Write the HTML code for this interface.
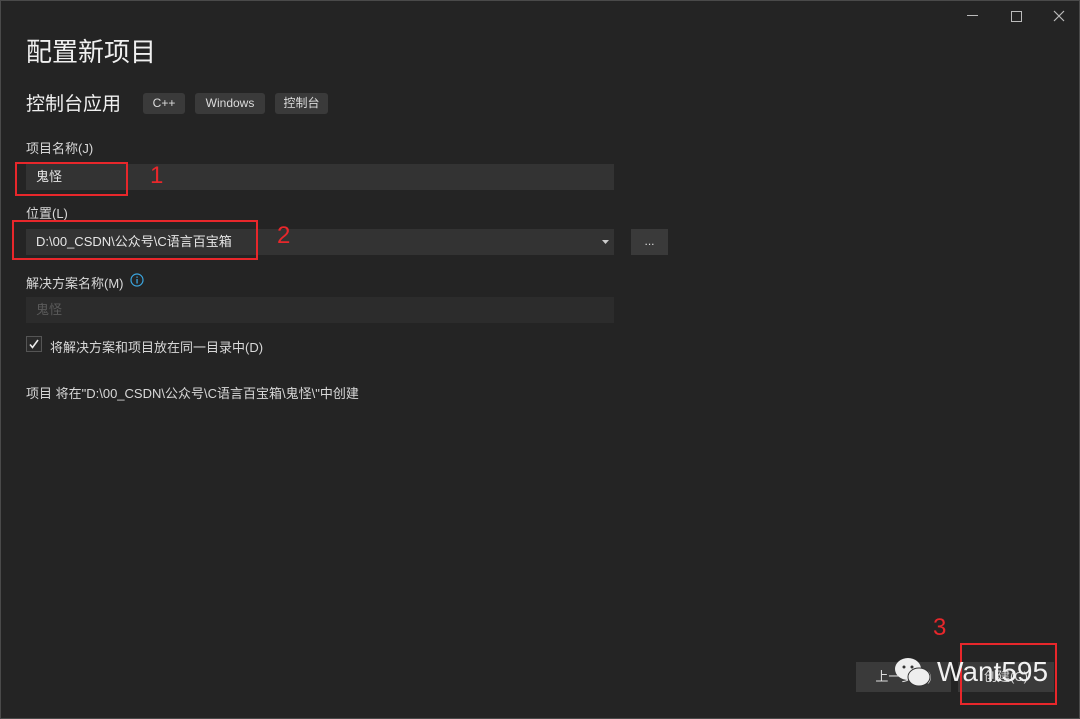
<!DOCTYPE html>
<html><head><meta charset="utf-8"><style>
html,body{margin:0;padding:0;}
body{width:1080px;height:719px;background:#242424;position:relative;overflow:hidden;font-family:"Liberation Sans","Noto Sans CJK SC",sans-serif;color:#e6e6e6;}
.frame{position:absolute;left:0;top:0;width:1078px;height:717px;border:1px solid #4a4a4a;}
.abs{position:absolute;white-space:nowrap;}
.tag{position:absolute;top:93px;height:21px;background:#3a3a3a;border-radius:3px;font-size:12px;line-height:21px;text-align:center;color:#dcdcdc;}
.field{position:absolute;left:26px;width:588px;height:26px;background:#333333;font-size:13px;line-height:26px;}
.red{position:absolute;border:2px solid #e8272b;}
.num{position:absolute;color:#e8272b;font-size:24px;}
.lbl{font-size:13px;color:#d8d8d8;}
.btn{position:absolute;top:662px;height:30px;background:#3a3a3a;font-size:13px;line-height:30px;text-align:center;color:#ddd;}
</style></head><body>
<div class="frame"></div>
<div class="abs" style="left:967px;top:15px;width:11px;height:1px;background:#bbb"></div>
<div class="abs" style="left:1011px;top:11px;width:9px;height:9px;border:1px solid #bbb"></div>
<svg class="abs" style="left:1053px;top:10px" width="12" height="12"><path d="M1 1L11 11M11 1L1 11" stroke="#bbb" stroke-width="1.2"/></svg>

<div class="abs" style="left:26px;top:32px;font-size:26px;color:#f0f0f0">配置新项目</div>
<div class="abs" style="left:26px;top:89px;font-size:19px;color:#f0f0f0">控制台应用</div>
<div class="tag" style="left:143px;width:42px">C++</div>
<div class="tag" style="left:195px;width:70px">Windows</div>
<div class="tag" style="left:275px;width:53px">控制台</div>

<div class="abs lbl" style="left:26px;top:138px">项目名称(J)</div>
<div class="field" style="top:164px"><span style="margin-left:10px">鬼怪</span></div>
<div class="red" style="left:15px;top:162px;width:109px;height:30px"></div>
<div class="num" style="left:150px;top:162px">1</div>

<div class="abs lbl" style="left:26px;top:203px">位置(L)</div>
<div class="field" style="top:229px"><span style="margin-left:10px">D:\00_CSDN\公众号\C语言百宝箱</span>
<svg style="position:absolute;right:5px;top:11px" width="7" height="4"><path d="M0 0H7L3.5 4Z" fill="#ccc"/></svg></div>
<div class="red" style="left:12px;top:220px;width:242px;height:36px"></div>
<div class="num" style="left:277px;top:222px">2</div>
<div class="abs" style="left:631px;top:229px;width:37px;height:26px;background:#3a3a3a;color:#ddd;font-size:12px;text-align:center;line-height:24px">...</div>

<div class="abs lbl" style="left:26px;top:273px">解决方案名称(M)</div>
<svg class="abs" style="left:130px;top:273px" width="14" height="14"><circle cx="7" cy="7" r="6" fill="none" stroke="#3ba6e0" stroke-width="1.2"/><rect x="6.4" y="6" width="1.3" height="4.5" fill="#3ba6e0"/><rect x="6.4" y="3.5" width="1.3" height="1.3" fill="#3ba6e0"/></svg>
<div class="field" style="top:297px;background:#2c2c2c;color:#5a5a5a"><span style="margin-left:10px">鬼怪</span></div>

<div class="abs" style="left:26px;top:336px;width:14px;height:14px;border:1px solid #555;background:#2a2a2a"></div>
<svg class="abs" style="left:28px;top:338px" width="12" height="12"><path d="M2 6.5L4.5 9.5L10 2" stroke="#eee" stroke-width="1.6" fill="none"/></svg>
<div class="abs lbl" style="left:50px;top:337px">将解决方案和项目放在同一目录中(D)</div>

<div class="abs lbl" style="left:26px;top:383px">项目 将在"D:\00_CSDN\公众号\C语言百宝箱\鬼怪\"中创建</div>

<div class="btn" style="left:856px;width:95px">上一步(B)</div>
<div class="btn" style="left:958px;width:96px">创建(C)</div>
<div class="num" style="left:933px;top:614px">3</div>
<div class="red" style="left:960px;top:643px;width:93px;height:58px"></div>
<svg class="abs" style="left:893px;top:656px" width="40" height="34"><ellipse cx="15" cy="13" rx="13" ry="11" fill="#eee"/><ellipse cx="26" cy="21" rx="11" ry="9" fill="#eee" stroke="#333" stroke-width="1"/><circle cx="11" cy="11" r="1.5" fill="#333"/><circle cx="19" cy="11" r="1.5" fill="#333"/></svg>
<div class="abs" style="left:937px;top:656px;font-size:28px;color:#f2f2f2">Want595</div>
</body></html>
